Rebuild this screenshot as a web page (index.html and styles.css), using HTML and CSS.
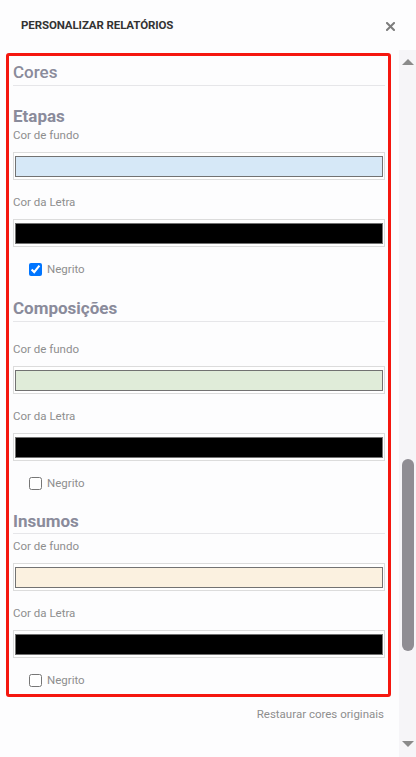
FILE: index.html
```html
<!DOCTYPE html>
<html lang="pt-br">

<head>
    <meta charset="UTF-8">
    <meta name="viewport" content="width=device-width, initial-scale=1.0">
    <title>Personalizar relatórios</title>
    <link rel="stylesheet" href="styles.css">
</head>

<body>
    <div class="modal-header">
        <h2>PERSONALIZAR RELATÓRIOS</h2>
        <button class="close" aria-label="Fechar">
            <svg width="9" height="9" viewBox="0 0 9 9">
                <path d="M1 1L8 8M8 1L1 8" stroke="#7d7d7d" stroke-width="2" stroke-linecap="square"/>
            </svg>
        </button>
    </div>

    <div class="modal-body">
        <div class="content">
            <div class="highlight">
                <h3 class="title">Cores</h3>

                <div class="section etapas">
                    <h4 class="section-title">Etapas</h4>
                    <label class="field-label first">Cor de fundo</label>
                    <div class="color-box"><div class="swatch" style="background:#d6e8f7"></div></div>
                    <label class="field-label">Cor da Letra</label>
                    <div class="color-box"><div class="swatch" style="background:#000"></div></div>
                    <label class="check"><input type="checkbox" checked> Negrito</label>
                </div>

                <div class="section composicoes">
                    <h4 class="section-title lined">Composições</h4>
                    <label class="field-label first">Cor de fundo</label>
                    <div class="color-box"><div class="swatch" style="background:#e0ecd9"></div></div>
                    <label class="field-label">Cor da Letra</label>
                    <div class="color-box"><div class="swatch" style="background:#000"></div></div>
                    <label class="check"><input type="checkbox"> Negrito</label>
                </div>

                <div class="section insumos">
                    <h4 class="section-title lined">Insumos</h4>
                    <label class="field-label first">Cor de fundo</label>
                    <div class="color-box"><div class="swatch" style="background:#fbf1e0"></div></div>
                    <label class="field-label">Cor da Letra</label>
                    <div class="color-box"><div class="swatch" style="background:#000"></div></div>
                    <label class="check"><input type="checkbox"> Negrito</label>
                </div>
            </div>

            <div class="footer">
                <a href="#" class="restore">Restaurar cores originais</a>
            </div>
        </div>

        <div class="scrollbar">
            <span class="arrow up"></span>
            <div class="track">
                <div class="thumb"></div>
            </div>
            <span class="arrow down"></span>
        </div>
    </div>
</body>

</html>
```

FILE: styles.css
```css
body {
    margin: 0;
    background: #fdfdfe;
    font-family: Roboto, "Liberation Sans", Arial, sans-serif;
    height: 757px;
    overflow: hidden;
    display: flex;
    flex-direction: column;
}

.modal-header {
    height: 50px;
    display: flex;
    align-items: center;
    justify-content: space-between;
    padding: 0 21px 0 21px;
}

.modal-header h2 {
    margin: 0;
    font-size: 11.5px;
    font-weight: 700;
    color: #333;
    letter-spacing: -0.1px;
}

.close {
    background: none;
    border: none;
    padding: 0;
    width: 9px;
    height: 9px;
    display: flex;
    cursor: pointer;
    margin-top: 2px;
}

.modal-body {
    flex: 1;
    display: flex;
}

.content {
    flex: 1;
    padding: 3px 8px 0 6px;
}

.highlight {
    border: 3px solid #f5170f;
    border-radius: 3px;
    padding: 6px 3px 5px 4px;
}

.title {
    margin: 0;
    font-size: 17px;
    line-height: 20px;
    font-weight: 500;
    color: #8a8b9b;
    padding-bottom: 3px;
    border-bottom: 1px solid #e6e6e9;
}

.section-title {
    margin: 0;
    font-size: 17px;
    line-height: 20px;
    font-weight: 700;
    color: #8a8b9b;
}

.section-title.lined {
    padding-bottom: 3px;
    border-bottom: 1px solid #e6e6e9;
}

.etapas {
    margin-top: 20px;
}

.composicoes {
    margin-top: 20px;
}

.composicoes .field-label.first {
    margin-top: 18px;
}

.insumos {
    margin-top: 19px;
}

.insumos .section-title.lined {
    padding-bottom: 2px;
}

.insumos .field-label.first {
    margin-top: 3px;
}

.field-label {
    display: block;
    font-size: 11.5px;
    line-height: 18px;
    color: #8e8e8e;
    margin-top: 13px;
    margin-bottom: 8px;
}

.field-label.first {
    margin-top: 0;
}

.color-box {
    height: 28px;
    box-sizing: border-box;
    border: 1px solid #dcdcdc;
    padding: 3px 1px 2px 1px;
    background: #fff;
}

.swatch {
    height: 21px;
    box-sizing: border-box;
    border: 1px solid #727272;
}

.check {
    display: flex;
    align-items: center;
    height: 18px;
    margin-top: 13px;
    padding-left: 16px;
    font-size: 11.5px;
    color: #8e8e8e;
}

.check input {
    width: 13px;
    height: 13px;
    margin: 0 5px 0 0;
}

.footer {
    display: flex;
    justify-content: flex-end;
    padding: 8px 7px 0 0;
}

.restore {
    font-size: 11.5px;
    line-height: 18px;
    color: #8e8e8e;
    text-decoration: none;
}

.scrollbar {
    width: 17px;
    background: #f6f5f8;
    display: flex;
    flex-direction: column;
    align-items: center;
    padding: 9px 0 10px 0;
}

.arrow {
    width: 0;
    height: 0;
    border-left: 6px solid transparent;
    border-right: 6px solid transparent;
}

.arrow.up {
    border-bottom: 6px solid #8a8a8a;
}

.arrow.down {
    border-top: 6px solid #8a8a8a;
}

.track {
    flex: 1;
    width: 100%;
    display: flex;
    justify-content: center;
    padding-top: 394px;
}

.thumb {
    width: 12px;
    height: 192px;
    border-radius: 6px;
    background: #8f8d93;
}
```
